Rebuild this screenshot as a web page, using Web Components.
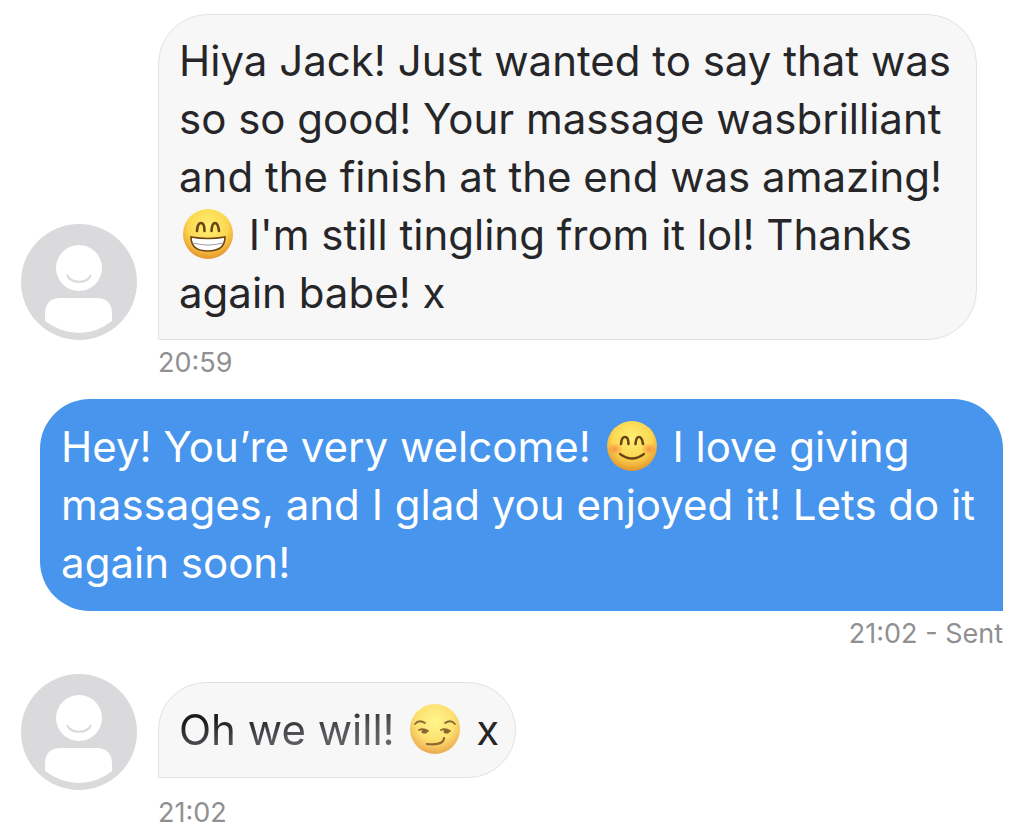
<!DOCTYPE html>
<html lang="en">
<head>
<meta charset="utf-8">
<meta name="viewport" content="width=device-width, initial-scale=1">
<title>Conversation</title>
<style>
  body { margin: 0; background: #fff; font-family: Inter, "Liberation Sans", sans-serif; }
</style>
</head>
<body>
<chat-thread>
  <chat-message time="20:59">Hiya Jack! Just wanted to say that was<br>so so good! Your massage wasbrilliant<br>and the finish at the end was amazing!<br><emoji-face mood="beaming"></emoji-face> I'm still tingling from it lol! Thanks<br>again babe! x</chat-message>
  <chat-message sent time="21:02 - Sent">Hey! You’re very welcome! <emoji-face mood="blush"></emoji-face> I love giving<br>massages, and I glad you enjoyed it! Lets do it<br>again soon!</chat-message>
  <chat-message short time="21:02"><fading-text>Oh we will!</fading-text> <emoji-face mood="smirk"></emoji-face> x</chat-message>
</chat-thread>

<script>
const define = (name, html, setup) => {
  const template = document.createElement('template');
  template.innerHTML = html;
  customElements.define(name, class extends HTMLElement {
    constructor() {
      super();
      this.attachShadow({ mode: 'open' }).append(template.content.cloneNode(true));
    }
    connectedCallback() { if (setup) setup(this, this.shadowRoot); }
  });
};

define('chat-thread', `
<style>
  :host { display: flex; flex-direction: column; gap: 20px; padding: 14px 21px 4px; }
</style>
<slot></slot>`);

define('user-avatar', `
<style>
  :host { display: block; flex: none; width: 116px; height: 116px; }
  svg { display: block; width: 100%; height: 100%; }
</style>
<svg viewBox="0 0 116 116" role="img" aria-label="Contact">
  <circle cx="58" cy="58" r="58" fill="#dadadc"/>
  <circle cx="58" cy="44" r="23" fill="#fff"/>
  <path d="M46 51C50 60 66 60 70 51" fill="none" stroke="#dadadc" stroke-width="2"/>
  <path d="M24 97V90Q24 74 40 74H75Q91 74 91 90V97Q76 109 58 109T24 97Z" fill="#fff"/>
</svg>`);

define('fading-text', `
<style>
  :host { display: inline; color: transparent; background: linear-gradient(172deg, #1c1c1e 25%, #55555a 60%, #66666a 85%); -webkit-background-clip: text; background-clip: text; }
</style>
<slot></slot>`);

define('chat-message', `
<style>
  :host { display: grid; grid-template-columns: 116px minmax(0, 1fr); column-gap: 21px; row-gap: 7px; justify-items: start; align-items: end; }
  .bubble {
    box-sizing: border-box; border: 1px solid #e2e2e4; border-radius: 50px 50px 50px 0;
    background: #f7f7f8; color: #262628; padding: 17px 25px 17px 20px;
    font-size: 42px; line-height: 58px; white-space: nowrap;
  }
  .time { grid-column: 2; font-size: 27px; line-height: 32px; color: #909092; }
  :host([sent]) { grid-template-columns: minmax(0, 1fr); justify-items: end; }
  :host([sent]) user-avatar { display: none; }
  :host([sent]) .bubble { border: 0; border-radius: 50px 50px 0 50px; background: #4795ec; color: #fff; padding: 19px 28px 19px 21px; }
  :host([sent]) .time { grid-column: 1; }
  :host([short]) { margin-top: 4px; }
  :host([short]) .bubble { border-radius: 48px 48px 48px 0; padding: 18px 16px 18px 20px; margin-bottom: 12px; }
</style>
<user-avatar></user-avatar>
<div class="bubble"><slot></slot></div>
<time class="time"></time>`, (host, root) => {
  root.querySelector('time').textContent = host.getAttribute('time');
});

const faces = {
  beaming: `
    <g fill="none" stroke="#6b4416" stroke-width="2.6" stroke-linecap="round">
      <path d="M14 22Q14.500 14 18 14T21.500 22"/><path d="M28.500 22Q29 14 32 14T36 22"/></g>
    <path d="M8 28Q25 31 42 28Q42 42 25 42T8 28Z" fill="#fff" stroke="#6b4416" stroke-width="1.600"/>
    <path d="M10 34Q25 38 40 34" fill="none" stroke="#a5a09c" stroke-width="1.200"/>`,
  blush: `
    <ellipse cx="8" cy="28" rx="8" ry="6" fill="url(#cheek)"/><ellipse cx="42" cy="28" rx="8" ry="6" fill="url(#cheek)"/>
    <g fill="none" stroke="#6b4416" stroke-width="2.600" stroke-linecap="round">
      <path d="M14 23Q14.500 16 18 16T21.500 23"/><path d="M28.500 23Q29 16 32 16T36 23"/>
      <path d="M13 33Q25 42 37 33" stroke-width="2.200"/></g>`,
  smirk: `
    <g fill="none" stroke="#8a6630" stroke-width="1.800" stroke-linecap="round">
      <path d="M5 20Q9 15 15 19"/><path d="M35 19Q41 15 45 20"/>
      <path d="M9 26Q13 24 18 27"/><path d="M31 26Q35 24 40 27"/>
      <path d="M17 40C25 41 34 40 34 34" stroke-width="2.200"/></g>
    <ellipse cx="14.500" cy="27.500" rx="3" ry="2" fill="#8a6630"/><ellipse cx="36.500" cy="27.500" rx="3" ry="2" fill="#8a6630"/>`
};
const labels = { beaming: '😁', blush: '😊', smirk: '😏' };

define('emoji-face', `
<style>
  :host { display: inline-block; width: 58px; height: 50px; vertical-align: -9px; }
  svg { display: block; width: 50px; height: 50px; margin: 0 auto; }
  :host([mood="smirk"]) { --core: #fff68c; --mid: #fde070; --rim: #eba94f; }
</style>
<svg viewBox="0 0 50 50" role="img">
  <defs>
    <radialGradient id="skin" cx=".5" cy=".35" r=".65">
      <stop offset="0" style="stop-color: var(--core, #fff075)"/><stop offset=".6" style="stop-color: var(--mid, #fcd750)"/><stop offset="1" style="stop-color: var(--rim, #e4952c)"/>
    </radialGradient>
    <radialGradient id="cheek"><stop offset="0" stop-color="#f9783f" stop-opacity=".7"/><stop offset="1" stop-color="#f9783f" stop-opacity="0"/></radialGradient>
  </defs>
  <circle cx="25" cy="25" r="25" fill="url(#skin)"/>
  <g class="features"></g>
</svg>`, (host, root) => {
  const mood = host.getAttribute('mood');
  root.querySelector('svg').setAttribute('aria-label', labels[mood]);
  root.querySelector('.features').innerHTML = faces[mood];
});
</script>
</body>
</html>
